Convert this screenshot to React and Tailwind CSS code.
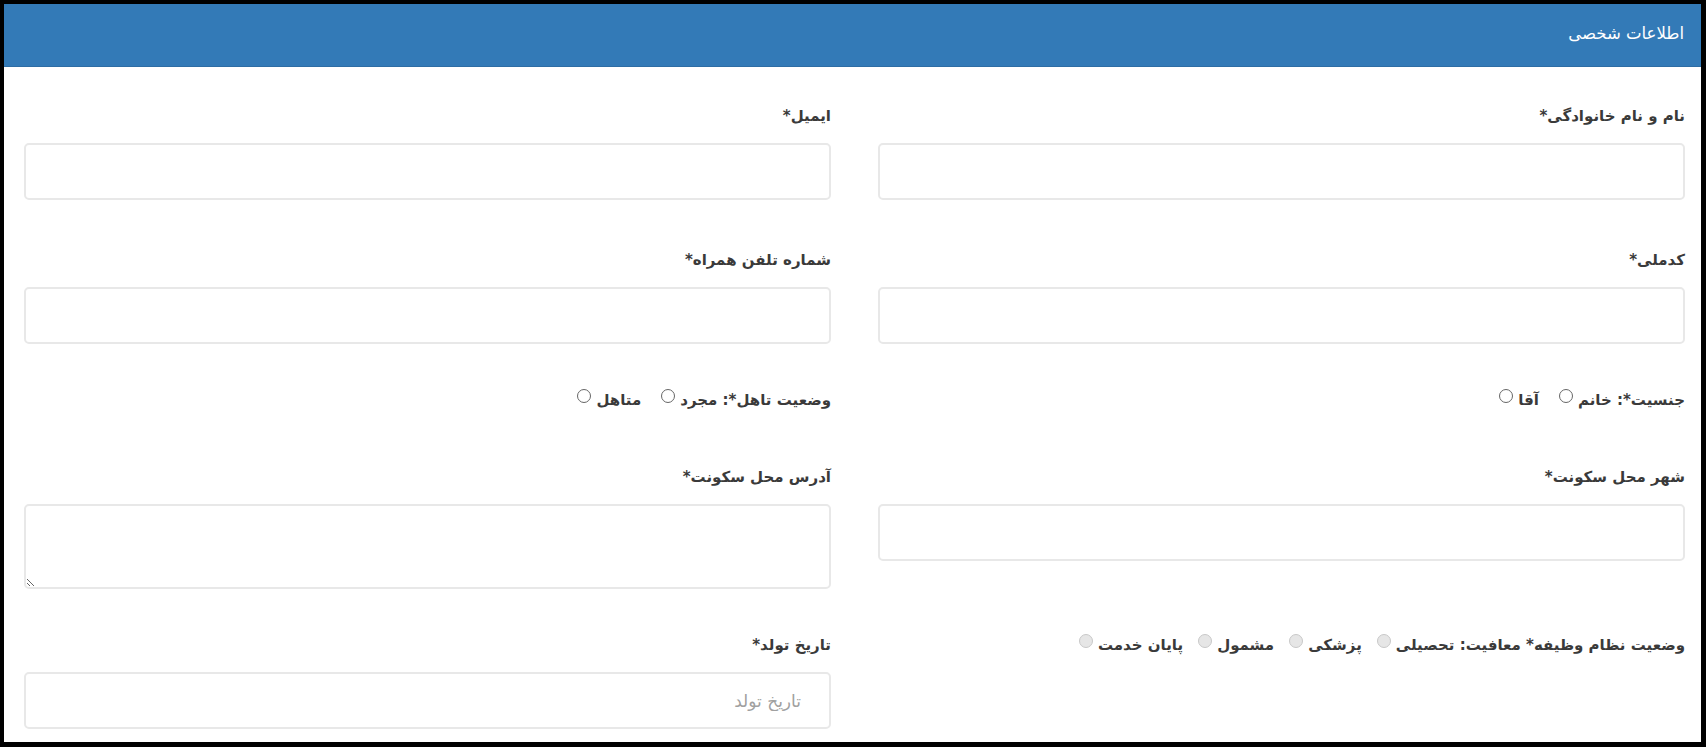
import React from 'react';

const Label = ({ children }) => (
  <div className="h-[22px] leading-[22px] text-[15px] font-bold text-[#3a3a3a]">{children}</div>
);

const TextInput = ({ placeholder }) => (
  <input
    type="text"
    dir="rtl"
    placeholder={placeholder}
    className="mt-[16px] block w-full h-[57px] bg-white border-2 border-[#e8e8e8] rounded-[5px] pl-[18px] pr-[28px] text-[17px] text-[#555] placeholder:text-[#a0a0a0] outline-none"
  />
);

const Field = ({ label, placeholder }) => (
  <div>
    <Label>{label}</Label>
    <TextInput placeholder={placeholder} />
  </div>
);

const Radio = ({ disabled }) => (
  <span
    className={
      disabled
        ? 'inline-block shrink-0 w-[14px] h-[14px] rounded-full border border-[#c8c8c8] bg-[#e6e6e6] mr-[5px]'
        : 'inline-block shrink-0 w-[14px] h-[14px] rounded-full border border-[#666] bg-white mr-[5px]'
    }
  />
);

const RadioRow = ({ label, options, disabled, spacing }) => (
  <div className="flex items-start h-[22px] leading-[22px] text-[15px] font-bold text-[#3a3a3a]">
    {options.map((opt, i) => (
      <React.Fragment key={opt}>
        <span className={i === 0 ? '' : spacing}>{i === 0 ? `${label} ${opt}` : opt}</span>
        <Radio disabled={disabled} />
      </React.Fragment>
    ))}
  </div>
);

export default function App() {
  return (
    <div className="h-[747px] bg-black pt-[4px] pl-[4px] pr-[5px] pb-[5px]">
      <div dir="rtl" className="h-full bg-white overflow-hidden font-['DejaVu_Sans',sans-serif]">
        {/* Panel heading */}
        <div className="h-[63px] bg-[#337ab7] border-b border-[#2e6da4] flex items-center pr-[17px] pb-[2px] text-white text-[16.5px]">
          اطلاعات شخصی
        </div>

        {/* Panel body */}
        <div className="pt-[38px] pr-[16px] pl-[20px]">
          <div className="grid grid-cols-2 gap-x-[47px]">
            <Field label="نام و نام خانوادگی*" />
            <Field label="ایمیل*" />
          </div>

          <div className="grid grid-cols-2 gap-x-[47px] mt-[49px]">
            <Field label="کدملی*" />
            <Field label="شماره تلفن همراه*" />
          </div>

          <div className="grid grid-cols-2 gap-x-[47px] mt-[45px]">
            <RadioRow label="جنسیت*:" options={['خانم', 'آقا']} spacing="mr-[20px]" />
            <RadioRow label="وضعیت تاهل*:" options={['مجرد', 'متاهل']} spacing="mr-[20px]" />
          </div>

          <div className="grid grid-cols-2 gap-x-[47px] items-start mt-[55px]">
            <Field label="شهر محل سکونت*" />
            <div>
              <Label>آدرس محل سکونت*</Label>
              <textarea
                dir="rtl"
                className="mt-[16px] block w-full h-[85px] bg-white border-2 border-[#e8e8e8] rounded-[5px] px-[18px] py-[8px] text-[16px] outline-none"
              />
            </div>
          </div>

          <div className="grid grid-cols-2 gap-x-[47px] items-start mt-[45px]">
            <RadioRow
              label="وضعیت نظام وظیفه* معافیت:"
              options={['تحصیلی', 'پزشکی', 'مشمول', 'پایان خدمت']}
              disabled
              spacing="mr-[15px]"
            />
            <Field label="تاریخ تولد*" placeholder="تاریخ تولد" />
          </div>
        </div>
      </div>
    </div>
  );
}
